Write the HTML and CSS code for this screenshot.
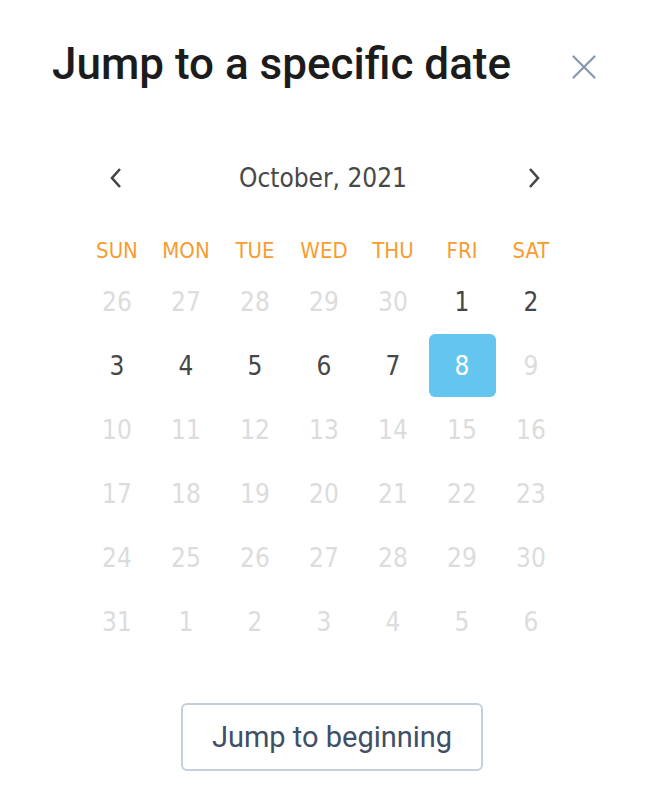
FILE: index.html
```html
<!DOCTYPE html>
<html lang="en">
<head>
    <meta charset="UTF-8">
    <meta name="viewport" content="width=device-width, initial-scale=1.0">
    <title>Jump to a specific date</title>
    <link rel="stylesheet" href="styles.css">
</head>
<body>
    <div class="dialog">
        <header class="dialog-header">
            <h1>Jump to a specific date</h1>
            <button class="close-btn" aria-label="Close">
                <svg width="24" height="24" viewBox="0 0 24 24">
                    <path d="M1.5 1.5 L22.5 22.5 M22.5 1.5 L1.5 22.5" stroke="#8797ab" stroke-width="2.2" fill="none" stroke-linecap="round"/>
                </svg>
            </button>
        </header>

        <div class="calendar">
            <div class="cal-nav">
                <button class="nav-btn" aria-label="Previous month">
                    <svg width="14" height="22" viewBox="0 0 14 22">
                        <path d="M11 2 L3 11 L11 20" stroke="#444" stroke-width="2.6" fill="none"/>
                    </svg>
                </button>
                <span class="cal-month">October, 2021</span>
                <button class="nav-btn" aria-label="Next month">
                    <svg width="14" height="22" viewBox="0 0 14 22">
                        <path d="M3 2 L11 11 L3 20" stroke="#444" stroke-width="2.6" fill="none"/>
                    </svg>
                </button>
            </div>

            <div class="weekdays">
                <span>SUN</span><span>MON</span><span>TUE</span><span>WED</span><span>THU</span><span>FRI</span><span>SAT</span>
            </div>

            <div class="days">
                <span class="day muted">26</span>
                <span class="day muted">27</span>
                <span class="day muted">28</span>
                <span class="day muted">29</span>
                <span class="day muted">30</span>
                <span class="day">1</span>
                <span class="day">2</span>

                <span class="day">3</span>
                <span class="day">4</span>
                <span class="day">5</span>
                <span class="day">6</span>
                <span class="day">7</span>
                <span class="day selected">8</span>
                <span class="day muted">9</span>

                <span class="day muted">10</span>
                <span class="day muted">11</span>
                <span class="day muted">12</span>
                <span class="day muted">13</span>
                <span class="day muted">14</span>
                <span class="day muted">15</span>
                <span class="day muted">16</span>

                <span class="day muted">17</span>
                <span class="day muted">18</span>
                <span class="day muted">19</span>
                <span class="day muted">20</span>
                <span class="day muted">21</span>
                <span class="day muted">22</span>
                <span class="day muted">23</span>

                <span class="day muted">24</span>
                <span class="day muted">25</span>
                <span class="day muted">26</span>
                <span class="day muted">27</span>
                <span class="day muted">28</span>
                <span class="day muted">29</span>
                <span class="day muted">30</span>

                <span class="day muted">31</span>
                <span class="day muted">1</span>
                <span class="day muted">2</span>
                <span class="day muted">3</span>
                <span class="day muted">4</span>
                <span class="day muted">5</span>
                <span class="day muted">6</span>
            </div>
        </div>

        <div class="dialog-footer">
            <button class="jump-btn">Jump to beginning</button>
        </div>
    </div>
</body>
</html>
```

FILE: styles.css
```css
body {
    margin: 0;
    padding: 0;
    background-color: #fff;
    font-family: Roboto, "Liberation Sans", sans-serif;
}
.dialog {
    width: 648px;
    height: 808px;
}
.dialog-header {
    display: flex;
    justify-content: space-between;
    align-items: center;
    padding: 38px 52px 0 52px;
}
.dialog-header h1 {
    margin: 0;
    font-size: 44px;
    line-height: 52px;
    font-weight: 500;
    color: #1c1c1c;
}
.close-btn {
    background: none;
    border: none;
    padding: 0;
    width: 24px;
    height: 24px;
    margin-top: 5px;
    cursor: pointer;
}
.close-btn svg {
    display: block;
}
.calendar {
    width: 483px;
    margin: 64px auto 0;
    font-family: "DejaVu Sans Condensed", "DejaVu Sans", sans-serif;
}
.cal-nav {
    display: flex;
    justify-content: space-between;
    align-items: center;
    height: 48px;
    padding: 0 24px 0 26px;
}
.nav-btn {
    background: none;
    border: none;
    padding: 0;
    cursor: pointer;
}
.nav-btn svg {
    display: block;
}
.cal-month {
    font-size: 26px;
    color: #484848;
    margin-left: -4px;
}
.weekdays {
    display: grid;
    grid-template-columns: repeat(7, 69px);
    height: 36px;
    margin-top: 30px;
    align-items: center;
    font-size: 22px;
    color: #f89c30;
    text-align: center;
}
.days {
    display: grid;
    grid-template-columns: repeat(7, 69px);
    grid-auto-rows: 64px;
    margin-top: 1px;
}
.day {
    display: flex;
    align-items: center;
    justify-content: center;
    margin: 1px 1px 0;
    border-radius: 6px;
    font-size: 26px;
    color: #464646;
}
.day.muted {
    color: #dcdcdc;
}
.day.selected {
    background-color: #64c5ee;
    color: #fff;
}
.dialog-footer {
    display: flex;
    justify-content: center;
    margin-top: 50px;
    padding-left: 16px;
}
.jump-btn {
    width: 302px;
    height: 68px;
    background-color: #fff;
    border: 2px solid #c5cfdc;
    border-radius: 6px;
    font-family: Roboto, "Liberation Sans", sans-serif;
    font-size: 29px;
    color: #3e4f66;
    cursor: pointer;
}
```
